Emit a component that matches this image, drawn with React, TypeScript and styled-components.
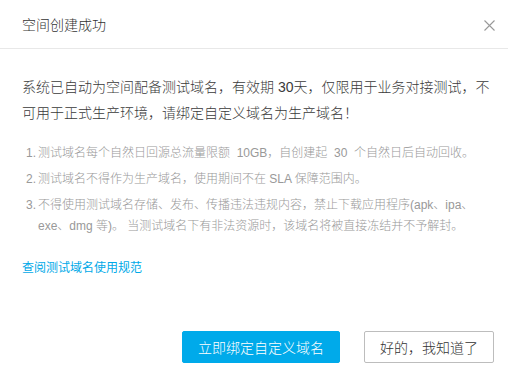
import React from "react";
import styled, { createGlobalStyle } from "styled-components";

const Global = createGlobalStyle`
  html, body { margin: 0; padding: 0; background: #fff; }
  body { font-family: "Liberation Sans", "Noto Sans CJK SC", Arial, sans-serif; }
  * { box-sizing: border-box; }
`;

const Dialog = styled.div`
  width: 508px;
  height: 377px;
  background: #fff;
  display: flex;
  flex-direction: column;
`;

const Header = styled.div`
  height: 49px;
  padding: 0 13px 0 22px;
  border-bottom: 1px solid #e8e8e8;
  display: flex;
  align-items: center;
  justify-content: space-between;
`;

const Title = styled.div`
  font-size: 14px;
  font-weight: 300;
  color: #333;
  line-height: 20px;
  padding-top: 1px;
`;

const Close = styled.button`
  width: 12px;
  height: 12px;
  padding: 0;
  border: 0;
  background: none;
  display: flex;
  align-items: center;
  justify-content: center;
  margin-top: 2px;
  cursor: pointer;
`;

const Body = styled.div`
  padding: 25px 16px 0 22px;
`;

const Lead = styled.p`
  margin: 0;
  font-size: 14px;
  font-weight: 300;
  line-height: 26px;
  color: #3a3a3a;
`;

const List = styled.ol`
  list-style: none;
  margin: 17px 0 0;
  padding: 0 0 0 4px;
`;

const Item = styled.li`
  display: flex;
  font-size: 12px;
  font-weight: 300;
  line-height: 21px;
  color: #999;
  & + & { margin-top: 5px; }
`;

const Num = styled.span`
  flex: 0 0 12px;
`;

const Link = styled.a`
  display: inline-block;
  margin-top: 21px;
  font-size: 12px;
  line-height: 21px;
  color: #00a9e8;
  text-decoration: none;
`;

const Footer = styled.div`
  margin-top: auto;
  padding: 0 14px 14px 0;
  display: flex;
  justify-content: flex-end;
  gap: 24px;
`;

const Button = styled.button<{ $primary?: boolean }>`
  height: 32px;
  width: ${(p) => (p.$primary ? "158px" : "130px")};
  border-radius: 2px;
  font-family: inherit;
  font-size: 14px;
  font-weight: 300;
  cursor: pointer;
  border: 1px solid ${(p) => (p.$primary ? "#00aaea" : "#bdbdbd")};
  background: ${(p) => (p.$primary ? "#00aaea" : "#fff")};
  color: ${(p) => (p.$primary ? "#fff" : "#333")};
`;

const items = [
  "测试域名每个自然日回源总流量限额\u00a0 10GB，自创建起\u00a0 30\u00a0 个自然日后自动回收。",
  "测试域名不得作为生产域名，使用期间不在 SLA 保障范围内。",
  "不得使用测试域名存储、发布、传播违法违规内容，禁止下载应用程序(apk、ipa、exe、dmg 等)。 当测试域名下有非法资源时，该域名将被直接冻结并不予解封。",
];

export default function App() {
  return (
    <>
      <Global />
      <Dialog>
        <Header>
          <Title>空间创建成功</Title>
          <Close aria-label="close">
            <svg width="11" height="11" viewBox="0 0 11 11">
              <path d="M0.5 0.5 L10.5 10.5 M10.5 0.5 L0.5 10.5" stroke="#999" strokeWidth="1.1" fill="none" />
            </svg>
          </Close>
        </Header>
        <Body>
          <Lead>
            系统已自动为空间配备测试域名，有效期 30天，仅限用于业务对接测试，不可用于正式生产环境，请绑定自定义域名为生产域名！
          </Lead>
          <List>
            {items.map((t, i) => (
              <Item key={i}>
                <Num>{i + 1}.</Num>
                <span>{t}</span>
              </Item>
            ))}
          </List>
          <Link href="#">查阅测试域名使用规范</Link>
        </Body>
        <Footer>
          <Button $primary>立即绑定自定义域名</Button>
          <Button>好的，我知道了</Button>
        </Footer>
      </Dialog>
    </>
  );
}
